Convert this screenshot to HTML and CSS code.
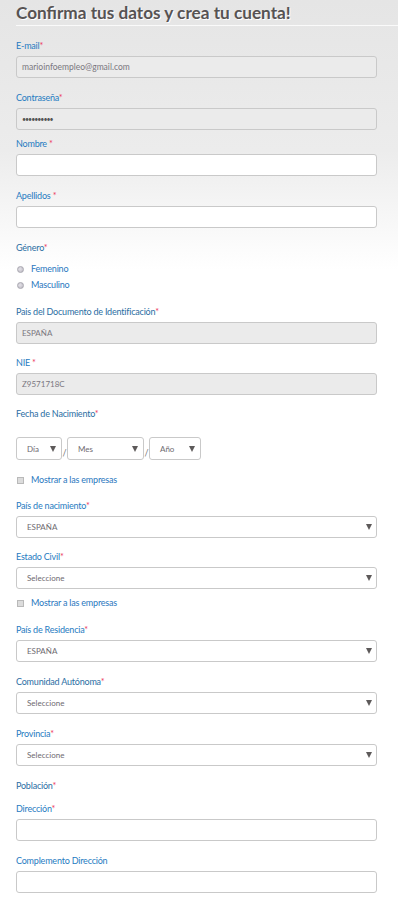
FILE: index.html
```html
<!DOCTYPE html>
<html lang="es">
<head>
    <meta charset="UTF-8">
    <meta name="viewport" content="width=device-width, initial-scale=1.0">
    <title>Confirma tus datos</title>
    <link rel="stylesheet" href="styles.css">
</head>
<body>
    <h1 class="title">Confirma tus datos y crea tu cuenta!</h1>

    <form class="form">
        <div class="field">
            <label>E-mail<span class="req">*</span></label>
            <div class="input disabled">marioinfoempleo@gmail.com</div>
        </div>

        <div class="field tight">
            <label>Contraseña<span class="req">*</span></label>
            <div class="input disabled pass">••••••••••</div>
        </div>

        <div class="field">
            <label>Nombre <span class="req">*</span></label>
            <div class="input"></div>
        </div>

        <div class="field">
            <label>Apellidos <span class="req">*</span></label>
            <div class="input"></div>
        </div>

        <div class="field short">
            <label class="dark">Género<span class="req">*</span></label>
            <div class="radios">
                <div class="opt"><span class="radio"></span>Femenino</div>
                <div class="opt"><span class="radio"></span>Masculino</div>
            </div>
        </div>

        <div class="field short">
            <label class="dark">Pais del Documento de Identificación<span class="req">*</span></label>
            <div class="input disabled small">ESPAÑA</div>
        </div>

        <div class="field short">
            <label>NIE <span class="req">*</span></label>
            <div class="input disabled small">Z9571718C</div>
        </div>

        <div class="field">
            <label class="dark">Fecha de Nacimiento<span class="req">*</span></label>
            <div class="date">
                <div class="select dia"><span>Día</span><i class="arrow"></i></div>
                <span class="slash">/</span>
                <div class="select mes"><span>Mes</span><i class="arrow"></i></div>
                <span class="slash">/</span>
                <div class="select ano"><span>Año</span><i class="arrow"></i></div>
            </div>
        </div>

        <div class="field short">
            <div class="opt check"><span class="box"></span>Mostrar a las empresas</div>
        </div>

        <div class="field short">
            <label>País de nacimiento<span class="req">*</span></label>
            <div class="select"><span>ESPAÑA</span><i class="arrow"></i></div>
        </div>

        <div class="field tight">
            <label>Estado Civil<span class="req">*</span></label>
            <div class="select"><span>Seleccione</span><i class="arrow"></i></div>
        </div>

        <div class="field">
            <div class="opt check"><span class="box"></span>Mostrar a las empresas</div>
        </div>

        <div class="field">
            <label>País de Residencia<span class="req">*</span></label>
            <div class="select"><span>ESPAÑA</span><i class="arrow"></i></div>
        </div>

        <div class="field">
            <label class="dark">Comunidad Autónoma<span class="req">*</span></label>
            <div class="select"><span>Seleccione</span><i class="arrow"></i></div>
        </div>

        <div class="field">
            <label>Provincia<span class="req">*</span></label>
            <div class="select"><span>Seleccione</span><i class="arrow"></i></div>
        </div>

        <div class="field poblacion">
            <label class="dark">Población<span class="req">*</span></label>
        </div>

        <div class="field">
            <label>Dirección<span class="req">*</span></label>
            <div class="input"></div>
        </div>

        <div class="field">
            <label>Complemento Dirección</label>
            <div class="input"></div>
        </div>
    </form>
</body>
</html>
```

FILE: styles.css
```css
html {
    background: #fff;
}

body {
    margin: 0;
    padding: 0 0 0 16px;
    min-height: 903px;
    font-family: Lato, "Open Sans", sans-serif;
    background: linear-gradient(to bottom, #e5e5e5 0, #ececec 150px, #fff 270px) no-repeat;
}

.title {
    margin: 0;
    padding-top: 1px;
    font-size: 17.2px;
    line-height: 24px;
    font-weight: bold;
    color: #575353;
    text-shadow: 1px 1px 0 #fff;
    border-bottom: 1px solid #fafafa;
}

.form {
    width: 361px;
    padding-top: 13px;
}

.field {
    margin-bottom: 13px;
}

.field.short {
    margin-bottom: 12px;
}

.field.tight {
    margin-bottom: 7px;
}

.field.poblacion {
    margin-bottom: 9px;
}

label {
    display: block;
    font-size: 9px;
    letter-spacing: -0.2px;
    line-height: 14px;
    color: #1f7bc1;
    margin-bottom: 3px;
}

label.dark {
    color: #2b6ea3;
}

.req {
    color: #ec3860;
}

.input {
    box-sizing: border-box;
    height: 22px;
    border: 1px solid #c9c9c9;
    border-radius: 3px;
    background: #fff;
    padding-left: 5px;
    font-size: 8.5px;
    line-height: 20px;
    color: #7a7780;
}

.input.disabled {
    background: #ebebeb;
}

.input.small {
    font-size: 8px;
}

.input.pass {
    font-size: 7px;
    letter-spacing: -1px;
    color: #555;
}

.radios {
    padding-top: 3px;
}

.opt {
    display: flex;
    align-items: center;
    font-size: 9px;
    letter-spacing: -0.2px;
    line-height: 16px;
    color: #2a78c0;
}

.radio {
    width: 5px;
    height: 5px;
    border-radius: 50%;
    border: 1px solid #a9a7b0;
    background: radial-gradient(circle at 40% 40%, #e4e2e8, #b9b6c0);
    margin: 0 7px 0 1px;
}

.box {
    width: 5px;
    height: 5px;
    border: 1px solid #b9b9b9;
    background: #dcdcdc;
    margin: 0 7px 0 1px;
}

.check {
    line-height: 14px;
}

.select {
    box-sizing: border-box;
    height: 22px;
    border: 1px solid #c9c9c9;
    border-radius: 3px;
    background: #fff;
    display: flex;
    align-items: center;
    justify-content: space-between;
    padding: 0 4px 0 10px;
    font-size: 8px;
    color: #6e6a70;
}

.arrow {
    width: 0;
    height: 0;
    border-left: 3px solid transparent;
    border-right: 3px solid transparent;
    border-top: 6px solid #5d5a5a;
}

.date {
    display: flex;
    align-items: center;
    padding-top: 13px;
}

.date .select {
    height: 23px;
    padding-right: 5px;
}

.dia {
    width: 46px;
}

.mes {
    width: 77px;
}

.ano {
    width: 52px;
}

.slash {
    width: 5px;
    margin-top: 8px;
    font-size: 9px;
    color: #777;
    text-align: center;
}
```
